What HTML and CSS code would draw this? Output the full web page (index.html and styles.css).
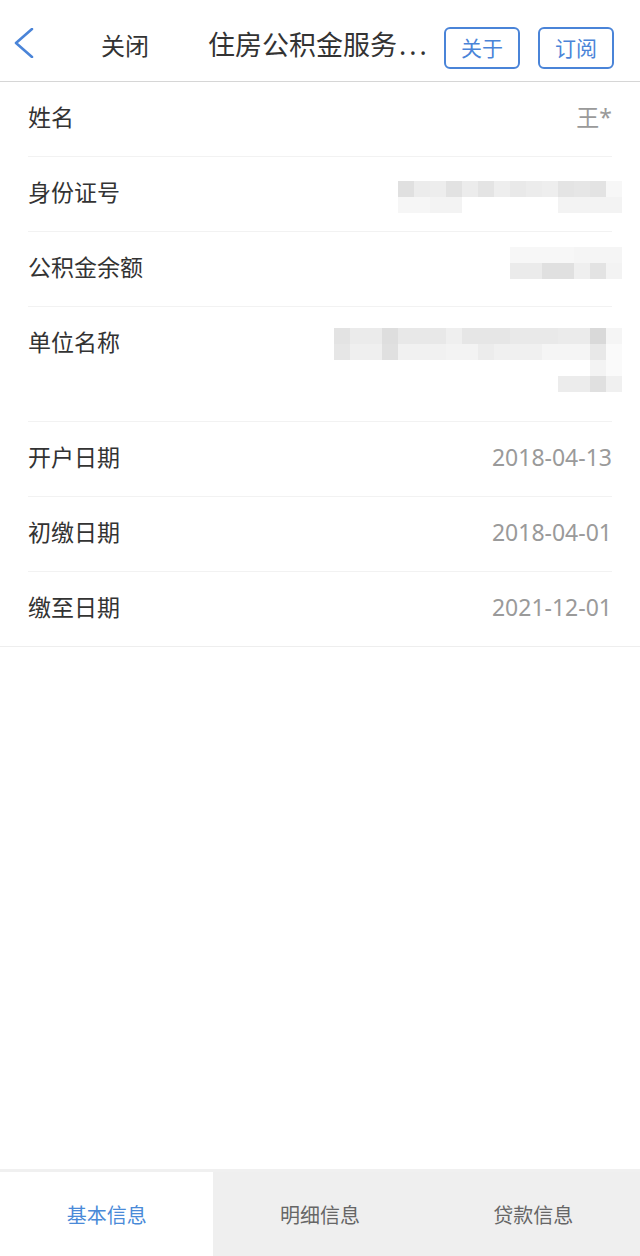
FILE: index.html
```html
<!DOCTYPE html>
<html lang="zh-CN">
<head>
<meta charset="UTF-8">
<meta name="viewport" content="width=device-width,initial-scale=1.0">
<title>住房公积金服务</title>
<link rel="stylesheet" href="styles.css">
</head>
<body>
<div class="header">
<svg class="back" viewBox="0 0 20 30" width="20" height="30"><polyline points="18,1 2,15 18,29" fill="none" stroke="#4a84d8" stroke-width="2.6" stroke-linecap="round" stroke-linejoin="round"/></svg>
<span class="close">关闭</span>
<span class="title">住房公积金服务<span class="dots">...</span></span>
<span class="btn">关于</span>
<span class="btn btn2">订阅</span>
</div>
<div class="list">
<div class="row">
<span class="label">姓名</span>
<span class="value">王*</span>
</div>
<div class="row">
<span class="label">身份证号</span>
<span class="mosaic m-id"></span>
</div>
<div class="row">
<span class="label">公积金余额</span>
<span class="mosaic m-bal"></span>
</div>
<div class="row tall">
<span class="label">单位名称</span>
<span class="mosaic m-org"></span>
</div>
<div class="row">
<span class="label">开户日期</span>
<span class="value">2018-04-13</span>
</div>
<div class="row">
<span class="label">初缴日期</span>
<span class="value">2018-04-01</span>
</div>
<div class="row">
<span class="label">缴至日期</span>
<span class="value">2021-12-01</span>
</div>
</div>
<div class="tabbar">
<span class="tab active">基本信息</span>
<span class="tab">明细信息</span>
<span class="tab">贷款信息</span>
</div>
</body>
</html>
```

FILE: styles.css
```css
body{
margin:0;
font-family:"Noto Sans","Noto Sans CJK SC",sans-serif;
background:#ffffff;
color:#333333;
display:flex;
flex-direction:column;
min-height:100vh;
}
.header{
display:flex;
align-items:center;
height:66px;
padding:15px 26px 0 14px;
border-bottom:1px solid #d6d6d6;
}
.back{
display:block;
margin-top:-11px;
}
.close{
font-size:24px;
margin-left:67px;
margin-top:-7px;
}
.title{
font-size:27px;
margin-left:59px;
margin-top:-10px;
flex:1;
white-space:nowrap;
overflow:hidden;
}
.dots{
letter-spacing:3px;
margin-left:2px;
}
.btn{
width:72px;
height:38px;
line-height:38px;
text-align:center;
border:2px solid #4a84d8;
border-radius:6px;
color:#4a84d8;
font-size:21px;
}
.btn2{
margin-left:18px;
}
.list{
padding:0 28px;
border-bottom:1px solid #eeeeee;
}
.row{
display:flex;
justify-content:space-between;
align-items:flex-start;
padding:20px 0 24px;
line-height:30px;
border-bottom:1px solid #f2f2f2;
}
.row:last-child{
border-bottom:none;
}
.row.tall{
padding-bottom:29px;
}
.label{
font-size:23px;
color:#333333;
}
.value{
font-size:23px;
color:#9a9a9a;
}
.mosaic{
display:block;
margin-right:-10px;
background-repeat:no-repeat;
}
.m-id{
width:224px;
height:32px;
margin-top:4px;
margin-bottom:-6px;
background-image:
linear-gradient(to right,#e0e0e0 0 16px,#ececec 16px 32px,#ededed 32px 48px,#e2e2e2 48px 64px,#ececec 64px 80px,#e4e4e4 80px 96px,#eeeeee 96px 112px,#e9e9e9 112px 128px,#ececec 128px 144px,#eeeeee 144px 160px,#e4e4e4 160px 176px,#e6e6e6 176px 192px,#e3e3e3 192px 208px,#f7f7f7 208px 224px),
linear-gradient(to right,#f6f6f6 0 32px,#f3f3f3 32px 64px,#ffffff 64px 160px,#f3f3f3 160px 224px);
background-size:100% 16px,100% 16px;
background-position:0 0,0 16px;
}
.m-bal{
width:112px;
height:32px;
margin-top:-5px;
background-image:
linear-gradient(to right,#f7f7f7 0 64px,#f5f5f5 64px 112px),
linear-gradient(to right,#ebebeb 0 32px,#e0e0e0 32px 64px,#efefef 64px 80px,#e3e3e3 80px 96px,#f3f3f3 96px 112px);
background-size:100% 16px,100% 16px;
background-position:0 0,0 16px;
}
.m-org{
width:288px;
height:64px;
margin-top:1px;
background-image:
linear-gradient(to right,#e3e3e3 0 16px,#ebebeb 16px 48px,#dedede 48px 64px,#e8e8e8 64px 112px,#efefef 112px 128px,#e6e6e6 128px 176px,#e9e9e9 176px 224px,#ebebeb 224px 256px,#d9d9d9 256px 272px,#f5f5f5 272px 288px),
linear-gradient(to right,#e6e6e6 0 16px,#efefef 16px 48px,#e0e0e0 48px 64px,#f1f1f1 64px 112px,#f3f3f3 112px 144px,#ececec 144px 160px,#f0f0f0 160px 208px,#f5f5f5 208px 256px,#e8e8e8 256px 272px,#fafafa 272px 288px),
linear-gradient(to right,#ffffff 0 256px,#f3f3f3 256px 272px,#fafafa 272px 288px),
linear-gradient(to right,#ffffff 0 224px,#ececec 224px 256px,#e0e0e0 256px 272px,#f0f0f0 272px 288px);
background-size:100% 16px,100% 16px,100% 16px,100% 16px;
background-position:0 0,0 16px,0 32px,0 48px;
}
.tabbar{
margin-top:auto;
display:flex;
height:84px;
border-top:3px solid #f0f0f0;
background:#efefef;
}
.tab{
flex:1;
display:flex;
align-items:center;
justify-content:center;
font-size:20px;
color:#666666;
}
.tab.active{
background:#ffffff;
color:#4a8ad8;
}
```
